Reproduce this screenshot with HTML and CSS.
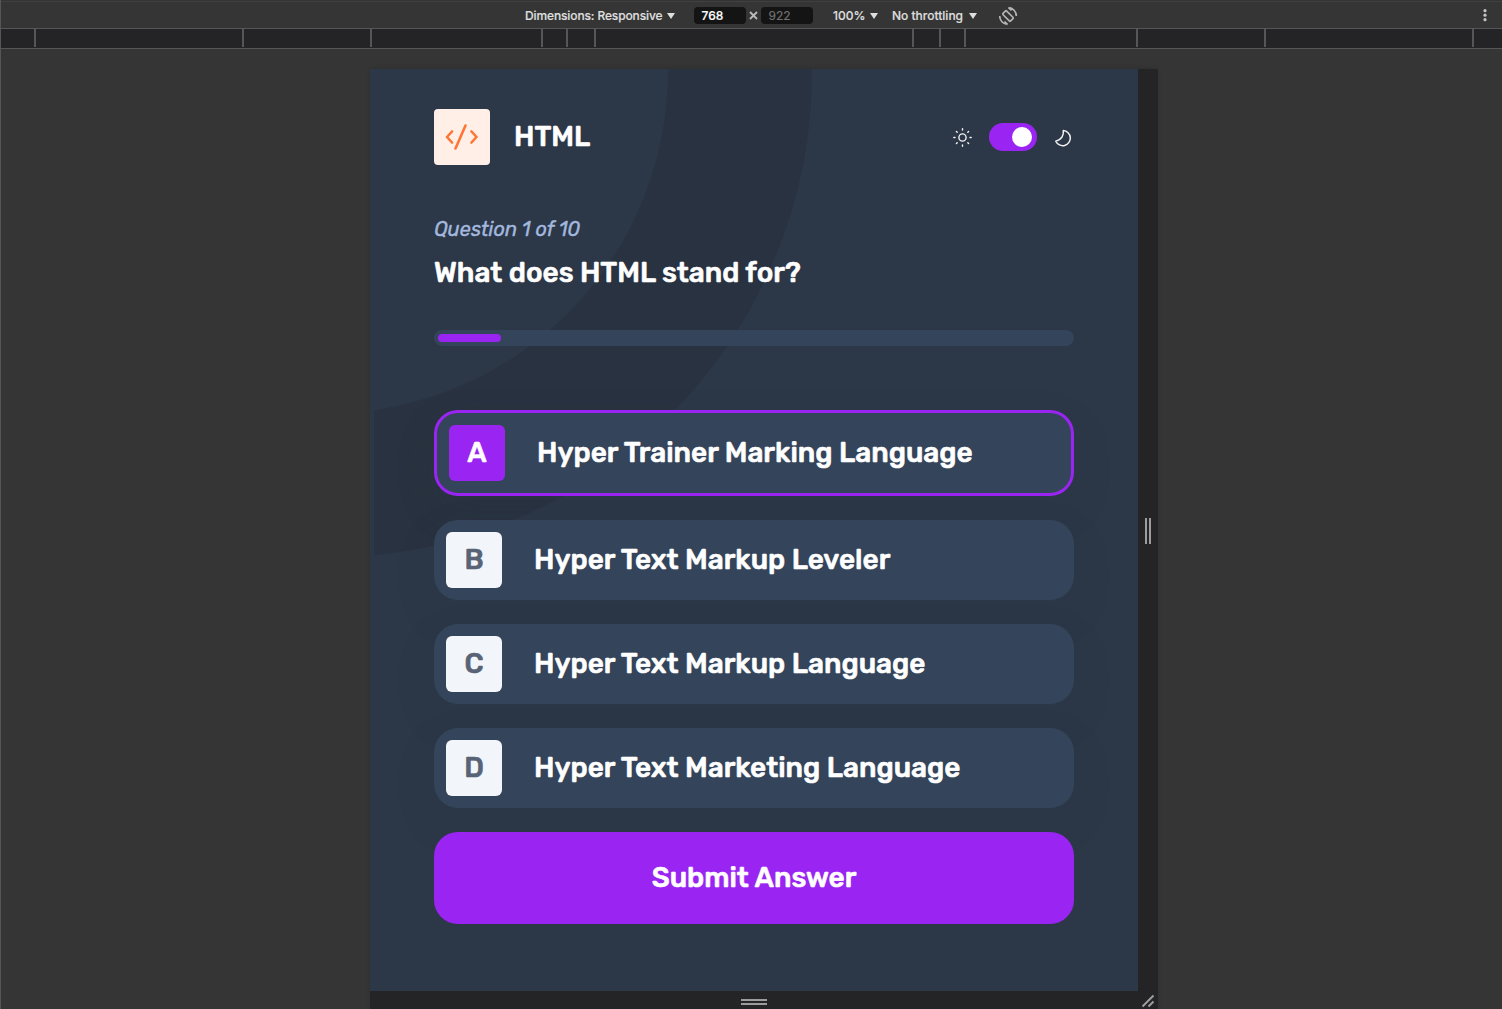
FILE: index.html
```html
<!DOCTYPE html>
<html lang="en">
<head>
<meta charset="utf-8">
<title>Frontend Quiz</title>
<link rel="stylesheet" href="styles.css">
</head>
<body>
<header class="toolbar">
  <div class="toolbar-group">
    <span class="menu dims">Dimensions: Responsive<i class="caret"></i></span>
    <span class="size">768</span>
    <svg class="times" width="9" height="9" viewBox="0 0 9 9"><path d="M1 1l7 7M8 1L1 8"/></svg>
    <span class="size muted">922</span>
    <span class="menu zoom">100%<i class="caret"></i></span>
    <span class="menu throttle">No throttling<i class="caret"></i></span>
    <svg class="rotate" width="20" height="20" viewBox="0 0 20 20"><rect x="7.4" y="4.6" width="5.2" height="10.8" rx="1" transform="rotate(-45 10 10)"/><path d="M10.5 1.7a8.2 8.2 0 0 1 7.8 8.3M10.5 1.7l3 2.8M9.5 18.3A8.2 8.2 0 0 1 1.7 10M9.5 18.3l-3-2.8" /></svg>
  </div>
  <svg class="more" width="4" height="14" viewBox="0 0 4 14"><circle cx="2" cy="1.700" r="1.6"/><circle cx="2" cy="6.200" r="1.6"/><circle cx="2" cy="10.700" r="1.6"/></svg>
</header>
<div class="ruler">
  <i style="width:33px"></i><i style="width:208px"></i><i style="width:128px"></i><i style="width:171px"></i><i style="width:25px"></i><i style="width:28px"></i><i style="width:318px"></i><i style="width:27px"></i><i style="width:25px"></i><i style="width:172px"></i><i style="width:128px"></i><i style="width:208px"></i><i class="rest"></i>
</div>
<main class="stage">
  <div class="device">
    <section class="screen">
      <svg class="pattern" width="764" height="922" viewBox="4 0 764 922"><circle cx="-44" cy="2.500" r="414"/></svg>
      <div class="top">
        <span class="logo"><svg width="34" height="26" viewBox="0 0 34 26"><path d="M7 7.500L2 13l5 5.500M20.500 1.500l-10 23M26.500 7.500l5 5.500-5 5.500"/></svg></span>
        <h1 class="subject">HTML</h1>
        <svg class="sun" width="20" height="20" viewBox="0 0 20 20"><circle cx="9.500" cy="10.500" r="3.600"/><path d="M9.500 1.800v1.200M9.500 18v1.200M.8 10.500h1.200M17 10.500h1.200M3.400 4.400l.8.8M14.800 15.800l.8.8M3.400 16.600l.8-.8M14.800 5.200l.8-.8"/></svg>
        <span class="switch"><i></i></span>
        <svg class="moon" width="18" height="18" viewBox="0 0 18 18"><path d="M9.300 1.500C10 6.500 7.300 11 1.800 12.200A7.600 7.600 0 1 0 9.300 1.500Z"/></svg>
      </div>
      <p class="count">Question 1 of 10</p>
      <h2 class="question">What does HTML stand for?</h2>
      <div class="progress"><i style="width:10%"></i></div>
      <div class="answers">
        <div class="answer selected"><span class="key">A</span><span class="label">Hyper Trainer Marking Language</span></div>
        <div class="answer"><span class="key">B</span><span class="label">Hyper Text Markup Leveler</span></div>
        <div class="answer"><span class="key">C</span><span class="label">Hyper Text Markup Language</span></div>
        <div class="answer"><span class="key">D</span><span class="label">Hyper Text Marketing Language</span></div>
        <div class="submit"><span>Submit Answer</span></div>
      </div>
    </section>
    <div class="handle-right"><i></i></div>
    <div class="handle-bottom"><i></i></div>
    <div class="corner"><svg width="14" height="14" viewBox="0 0 14 14"><path d="M1.500 12.500l11-11M7.500 12.500l5-5"/></svg></div>
  </div>
</main>
</body>
</html>
```
FILE: styles.css
```css
* { box-sizing: border-box; }
body { margin: 0; width: 1502px; height: 1009px; overflow: hidden; display: flex; flex-direction: column; background: #353535; border-left: 1px solid #565656; font-family: Inter, sans-serif; color: #dedede; }
h1, h2, p { margin: 0; }
svg { display: block; flex: none; fill: none; }
.toolbar { height: 29px; flex: none; display: flex; align-items: center; padding-top: 2px; border-top: 1px solid #343434; border-bottom: 1px solid #565656; box-shadow: inset 0 1px #404040; font-size: 12px; -webkit-text-stroke: .2px; }
.toolbar-group { flex: 1; display: flex; align-items: center; padding-left: 524px; }
.menu { display: flex; align-items: center; justify-content: space-between; white-space: nowrap; font-weight: 500; }
.dims { width: 150px; letter-spacing: -0.12px; }
.zoom { width: 45px; margin-left: 20px; }
.throttle { width: 85px; margin-left: 14px; }
.caret { border: 4px solid transparent; border-top: 6px solid #dedede; border-bottom: 0; }
.size { width: 52px; height: 17px; margin-left: 19px; padding-left: 7.5px; line-height: 17px; border-radius: 4px; background: #141414; color: #fff; font-weight: 500; }
.times { margin: 0 3px; stroke: #bbb; stroke-width: 1.8; }
.size.muted { margin-left: 0; color: #717171; font-weight: 400; }
.rotate { margin-left: 21px; stroke: #b4b4b4; stroke-width: 1.7; }
.more { margin-right: 15px; fill: #c4c4c4; }
.ruler { height: 20px; flex: none; display: flex; background: #242426; border-bottom: 1px solid #565656; }
.ruler i { height: 18px; border-left: 2px solid #565656; flex: none; }
.ruler i:first-child { border-left: 0; }
.ruler .rest { width: 28px; }
.stage { flex: 1; display: flex; padding: 20px 0 0 369px; }
.device { display: grid; grid-template: 922px 18px / 768px 20px; background: #242426; box-shadow: 0 -1px 4px rgba(0,0,0,.1); }
.screen { position: relative; padding: 40px 64px 0; background: #2c3747; overflow: hidden; font-family: Rubik, Roboto, sans-serif; color: #fff; }
.screen > * { position: relative; }
.screen > .pattern { position: absolute; left: 4px; top: 0; }
.pattern circle { stroke: #293240; stroke-width: 144; }
.top { display: flex; align-items: center; height: 56px; }
.logo { width: 56px; height: 56px; display: grid; place-items: center; border-radius: 4px; background: #ffefe6; }
.logo svg { stroke: #ff7535; stroke-width: 2.6; stroke-linecap: round; stroke-linejoin: round; }
.subject, .question, .label, .key, .submit { font-size: 28px; line-height: 33px; font-weight: 500; white-space: nowrap; -webkit-text-stroke: .6px; }
.subject { flex: 1; margin-left: 24px; padding-bottom: 1px; }
.sun { stroke: #f2f2f2; stroke-width: 1.4; stroke-linecap: round; }
.switch { width: 48px; height: 28px; margin: 0 17px 0 16px; padding: 4px 5px; display: flex; justify-content: flex-end; border-radius: 14px; background: #9a25f2; }
.switch i { width: 20px; height: 20px; border-radius: 50%; background: #fff; }
.moon { margin: 1px 2px 0 0; stroke: #f2f2f2; stroke-width: 1.5; stroke-linejoin: round; }
.count { margin-top: 49px; font-size: 20px; line-height: 30px; font-style: italic; font-weight: 400; color: #a2b8df; white-space: nowrap; -webkit-text-stroke: .4px; }
.question { margin-top: 12px; }
.progress { height: 16px; margin-top: 41px; padding: 4px; border-radius: 8px; background: #34445a; }
.progress i { display: block; height: 8px; border-radius: 4px; background: #9a25f2; }
.answers { margin-top: 64px; display: flex; flex-direction: column; gap: 24px; }
.answer { height: 80px; padding: 12px; display: flex; align-items: center; border-radius: 24px; background: #34445a; box-shadow: 0 16px 40px rgba(44,55,70,.14); }
.answer.selected { height: 86px; border: 3px solid #9a25f2; }
.key { width: 56px; height: 56px; margin-right: 32px; padding-bottom: 1px; display: grid; place-items: center; border-radius: 6px; background: #f2f5fa; color: #586376; }
.selected .key { background: #9a25f2; color: #fff; }
.label { padding-bottom: 1px; }
.submit { height: 92px; padding-bottom: 2px; display: grid; place-items: center; border-radius: 24px; background: #9a25f2; }
.handle-right { display: grid; place-items: center; padding-top: 2px; }
.handle-right i { width: 6px; height: 26px; border: solid #9c9c9c; border-width: 0 2px; }
.handle-bottom { display: grid; place-items: center; padding-top: 4px; }
.handle-bottom i { width: 26px; height: 6px; border: solid #9c9c9c; border-width: 2px 0; }
.corner { padding: 3px 0 0 3px; }
.corner svg { stroke: #9c9c9c; stroke-width: 2; }
```
